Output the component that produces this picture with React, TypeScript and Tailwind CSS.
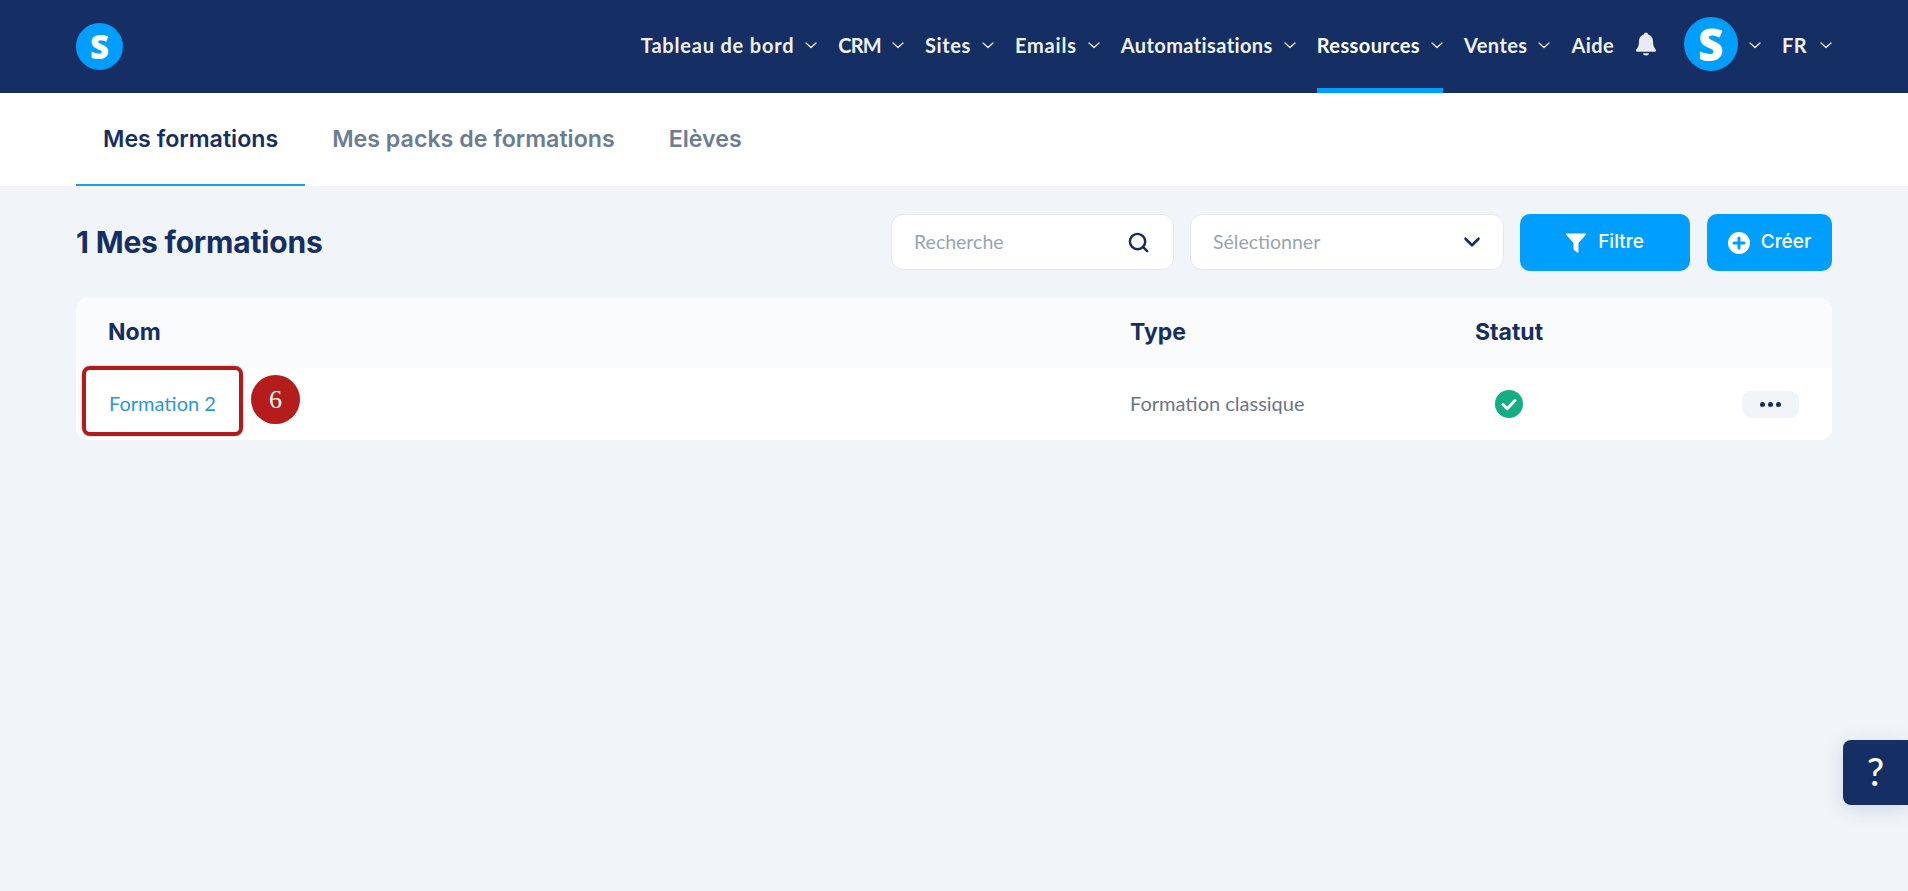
import { ChevronDown, Search } from "lucide-react";

// font is a stand-in for the original, so a few labels need their spacing nudged
const NAV_ITEMS = [
  { label: "Tableau de bord", chevron: true, spacing: "tracking-[0.8px]" },
  { label: "CRM", chevron: true, spacing: "tracking-[-0.8px]" },
  { label: "Sites", chevron: true, spacing: "tracking-[0.64px]" },
  { label: "Emails", chevron: true, spacing: "tracking-[0.8px]" },
  { label: "Automatisations", chevron: true },
  { label: "Ressources", chevron: true, active: true },
  { label: "Ventes", chevron: true },
  { label: "Aide", chevron: false },
];

const TABS = [
  { label: "Mes formations", active: true },
  { label: "Mes packs de formations", active: false },
  { label: "Elèves", active: false },
];

function SmallChevron() {
  return (
    <svg width="12" height="7" viewBox="0 0 12 7" fill="none" className="shrink-0">
      <path d="M1 1l5 4.6L11 1" stroke="#e8edf5" strokeWidth="1.3" strokeLinecap="round" strokeLinejoin="round" />
    </svg>
  );
}

function Header() {
  return (
    <header className="flex h-[93px] items-center justify-between bg-[#152e63] px-[76px]">
      <div className="flex h-[47px] w-[47px] items-center justify-center rounded-full bg-[#009fff]">
        <span className="font-['Open_Sans',sans-serif] text-[33px] leading-none font-extrabold text-white">S</span>
      </div>
      <nav className="flex h-full items-center font-['Lato',sans-serif] text-[20px] font-bold tracking-[0.4px] text-[#eef1f7]">
        <div className="flex h-full items-center gap-[21px]">
          {NAV_ITEMS.map((item) => (
            <div
              key={item.label}
              className={`flex h-full items-center gap-[11px] border-b-[5px] pt-[2px] ${
                item.active ? "border-[#009fff] text-white" : "border-transparent"
              }`}
            >
              <span className={item.spacing}>{item.label}</span>
              {item.chevron && <SmallChevron />}
            </div>
          ))}
        </div>
        <svg width="22" height="24" viewBox="2 0 20 24" className="-mt-[6px] ml-[21px] shrink-0" fill="#e8ebf1">
          <path d="M12 .5c-1.100 0-1.900.8-1.900 1.800C6.900 3.100 5 5.900 5 9.100c0 4.600-1 6.800-2.700 8.500-.8.8-.3 2.200.9 2.200h17.600c1.200 0 1.700-1.400.9-2.200C20 15.900 19 13.700 19 9.100c0-3.200-1.900-6-5.100-6.800C13.900 1.300 13.100.5 12 .5z" />
          <path d="M9 21.300h6c0 1.400-1.300 2.200-3 2.200s-3-.8-3-2.200z" />
        </svg>
        <div className="-mt-[5px] ml-[27px] flex h-[54px] w-[54px] items-center justify-center rounded-full bg-[#009fff]">
          <span className="font-['Open_Sans',sans-serif] text-[44px] leading-none font-extrabold text-white">S</span>
        </div>
        <div className="-mt-[3px] ml-[11px]">
          <SmallChevron />
        </div>
        <span className="-mt-[3px] ml-[21px]">FR</span>
        <div className="-mt-[3px] ml-[13px]">
          <SmallChevron />
        </div>
      </nav>
    </header>
  );
}

function Tabs() {
  return (
    <div className="flex h-[93px] bg-white px-[76px] font-['Inter',sans-serif] text-[23.2px] font-semibold">
      {TABS.map((tab) => (
        <div
          key={tab.label}
          className={`flex items-center border-b-2 pt-[1px] pr-[27px] pl-[27px] ${
            tab.active ? "border-[#1d9fe8] text-[#152e63]" : "border-transparent text-[#6b7c93]"
          }`}
        >
          {tab.label}
        </div>
      ))}
    </div>
  );
}

function Toolbar() {
  return (
    <div className="flex items-center justify-between">
      <h1 className="font-['Inter',sans-serif] text-[30px] font-bold tracking-[-0.2px] text-[#152e63]">1 Mes formations</h1>
      <div className="flex items-start gap-[16px]">
        <div className="flex h-[56px] w-[283px] items-center justify-between rounded-[12px] border border-[#e3e7ee] bg-white pr-[23px] pl-[22px] font-['Lato',sans-serif] text-[19.5px] text-[#98a4b3]">
          <span>Recherche</span>
          <Search size={23} strokeWidth={2.6} color="#152e63" />
        </div>
        <div className="flex h-[56px] w-[314px] items-center justify-between rounded-[12px] border border-[#e3e7ee] bg-white pr-[18px] pl-[22px] font-['Lato',sans-serif] text-[19.5px] text-[#98a4b3]">
          <span>Sélectionner</span>
          <ChevronDown size={26} strokeWidth={2.4} color="#152e63" />
        </div>
        <button className="flex h-[57px] w-[170px] items-center justify-center gap-[12px] rounded-[10px] bg-[#009fff] font-['Inter',sans-serif] text-[19px] font-medium text-white">
          <svg width="20" height="20" viewBox="0 0 20 20" fill="#fff">
            <path d="M.8.500h18.400c.7 0 1 .8.600 1.300L12.500 10v8.900c0 .7-.8 1-1.300.6l-3.200-2.600c-.3-.2-.5-.5-.5-.8V10L.2 1.800C-.2 1.300.1.500.8.500z" />
          </svg>
          Filtre
        </button>
        <button className="ml-px flex h-[57px] w-[125px] items-center justify-center gap-[11px] rounded-[10px] bg-[#009fff] font-['Inter',sans-serif] text-[19px] font-medium text-white">
          <svg width="22" height="22" viewBox="0 0 22 22">
            <circle cx="11" cy="11" r="11" fill="#fff" />
            <path d="M11 6v10M6 11h10" stroke="#009fff" strokeWidth="3" strokeLinecap="round" />
          </svg>
          Créer
        </button>
      </div>
    </div>
  );
}

function Table() {
  return (
    <div className="relative mt-[27px] rounded-[12px] bg-white">
      <div className="grid h-[70px] grid-cols-[1022px_345px_1fr] items-center rounded-t-[12px] bg-[#f9fbfd] pb-[2px] pl-[32px] font-['Inter',sans-serif] text-[23px] font-bold text-[#152e63]">
        <span>Nom</span>
        <span>Type</span>
        <span>Statut</span>
      </div>
      <div className="grid h-[72px] grid-cols-[1022px_345px_1fr] items-center pl-[32px] font-['Lato',sans-serif] text-[20px]">
        <span className="pb-[2px] pl-[1px] text-[#2b97dc]">Formation 2</span>
        <span className="pb-[2px] text-[#6b7686]">Formation classique</span>
        <div className="flex items-center justify-between pr-[33px]">
          <svg width="28" height="28" viewBox="0 0 28 28" className="ml-[20px]">
            <circle cx="14" cy="14" r="14" fill="#17ad84" />
            <path d="M8 14.500l4.200 4.200L20 10.500" fill="none" stroke="#fff" strokeWidth="3" strokeLinecap="round" strokeLinejoin="round" />
          </svg>
          <div className="flex h-[27px] w-[57px] items-center justify-center gap-[3px] rounded-[9px] bg-[#f1f5f9]">
            <span className="h-[5px] w-[5px] rounded-full bg-[#152e63]" />
            <span className="h-[5px] w-[5px] rounded-full bg-[#152e63]" />
            <span className="h-[5px] w-[5px] rounded-full bg-[#152e63]" />
          </div>
        </div>
      </div>
      {/* annotation laid over the row */}
      <div className="absolute top-[68px] left-[6px] h-[70px] w-[161px] rounded-[8px] border-[4px] border-[#b01c1c] shadow-[0_0_2px_rgba(0,0,0,0.4)]" />
      <div className="absolute top-[77px] left-[175px] flex h-[49px] w-[49px] items-center justify-center rounded-full bg-[#b51c1c] font-['Liberation_Serif',serif] text-[26px] text-white">
        6
      </div>
    </div>
  );
}

export default function App() {
  return (
    <div className="relative h-[891px] overflow-hidden bg-[#f1f5f9]">
      <Header />
      <Tabs />
      <main className="px-[76px] pt-[28px]">
        <Toolbar />
        <Table />
      </main>
      <button className="absolute top-[740px] right-0 flex h-[65px] w-[65px] items-center justify-center rounded-l-[8px] bg-[#152e63] pb-[2px] font-['Lato',sans-serif] text-[38px] font-medium text-white shadow-[0_4px_20px_rgba(21,46,99,0.15)]">
        ?
      </button>
    </div>
  );
}
